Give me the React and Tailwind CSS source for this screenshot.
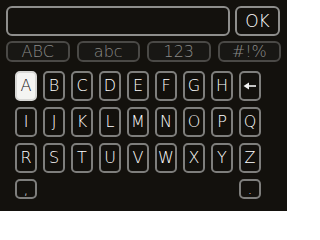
import React from "react";

const font = { fontFamily: '"DejaVu Sans", "Liberation Sans", sans-serif' };

function Key({ children, active }) {
  return (
    <div
      className={
        "w-[22px] h-[30px] rounded-[5px] border-2 flex items-center justify-center text-[16px] font-extralight leading-none " +
        (active
          ? "bg-[#f4f4f2] border-[#d8d8d6] text-[#111]"
          : "border-[#7e7e7c] text-white bg-[#12100c]")
      }
    >
      {children}
    </div>
  );
}

function Back() {
  return (
    <div className="w-[22px] h-[30px] rounded-[5px] border-2 border-[#7e7e7c] flex items-center justify-center">
      <svg width="14" height="10" viewBox="0 0 14 10">
        <path d="M0.5 5 L6 1.5 L6 8.5 Z" fill="#f2f2f2" />
        <rect x="5" y="4.2" width="8" height="1.6" fill="#f2f2f2" />
      </svg>
    </div>
  );
}

export default function App() {
  const rows = [
    ["A", "B", "C", "D", "E", "F", "G", "H"],
    ["I", "J", "K", "L", "M", "N", "O", "P", "Q"],
    ["R", "S", "T", "U", "V", "W", "X", "Y", "Z"],
  ];
  return (
    <div className="w-[287px] h-[211px] bg-[#13110d] overflow-hidden" style={font}>
      <div className="flex gap-[5px] pl-[6px] pt-[6px]">
        <div className="w-[224px] h-[30px] rounded-[6px] border-2 border-[#8e8e8c]" />
        <div className="w-[45px] h-[30px] rounded-[6px] border-2 border-[#8e8e8c] flex items-center justify-center text-[17px] font-extralight text-white leading-none">
          OK
        </div>
      </div>
      <div className="flex gap-[7px] pl-[6px] mt-[5px] w-[281px]">
        {["ABC", "abc", "123", "#!%"].map((t) => (
          <div
            key={t}
            className="flex-1 h-[21px] rounded-[6px] border-2 border-[#4a4946] bg-[#181714] flex items-center justify-center text-[16px] font-extralight text-[#8a8a88] leading-none"
          >
            {t}
          </div>
        ))}
      </div>
      <div className="flex flex-col gap-[6px] pl-[15px] mt-[9px]">
        {rows.map((r, i) => (
          <div key={i} className="flex gap-[6px]">
            {r.map((k) => (
              <Key key={k} active={k === "A"}>
                {k}
              </Key>
            ))}
            {i === 0 && <Back />}
          </div>
        ))}
        <div className="flex justify-between w-[246px]">
          <div className="w-[22px] h-[20px] rounded-[5px] border-2 border-[#7e7e7c] flex items-center justify-center text-[14px] text-white font-extralight leading-none">
            ,
          </div>
          <div className="w-[22px] h-[20px] rounded-[5px] border-2 border-[#7e7e7c] flex items-center justify-center text-[14px] text-white font-extralight leading-none">
            .
          </div>
        </div>
      </div>
    </div>
  );
}
